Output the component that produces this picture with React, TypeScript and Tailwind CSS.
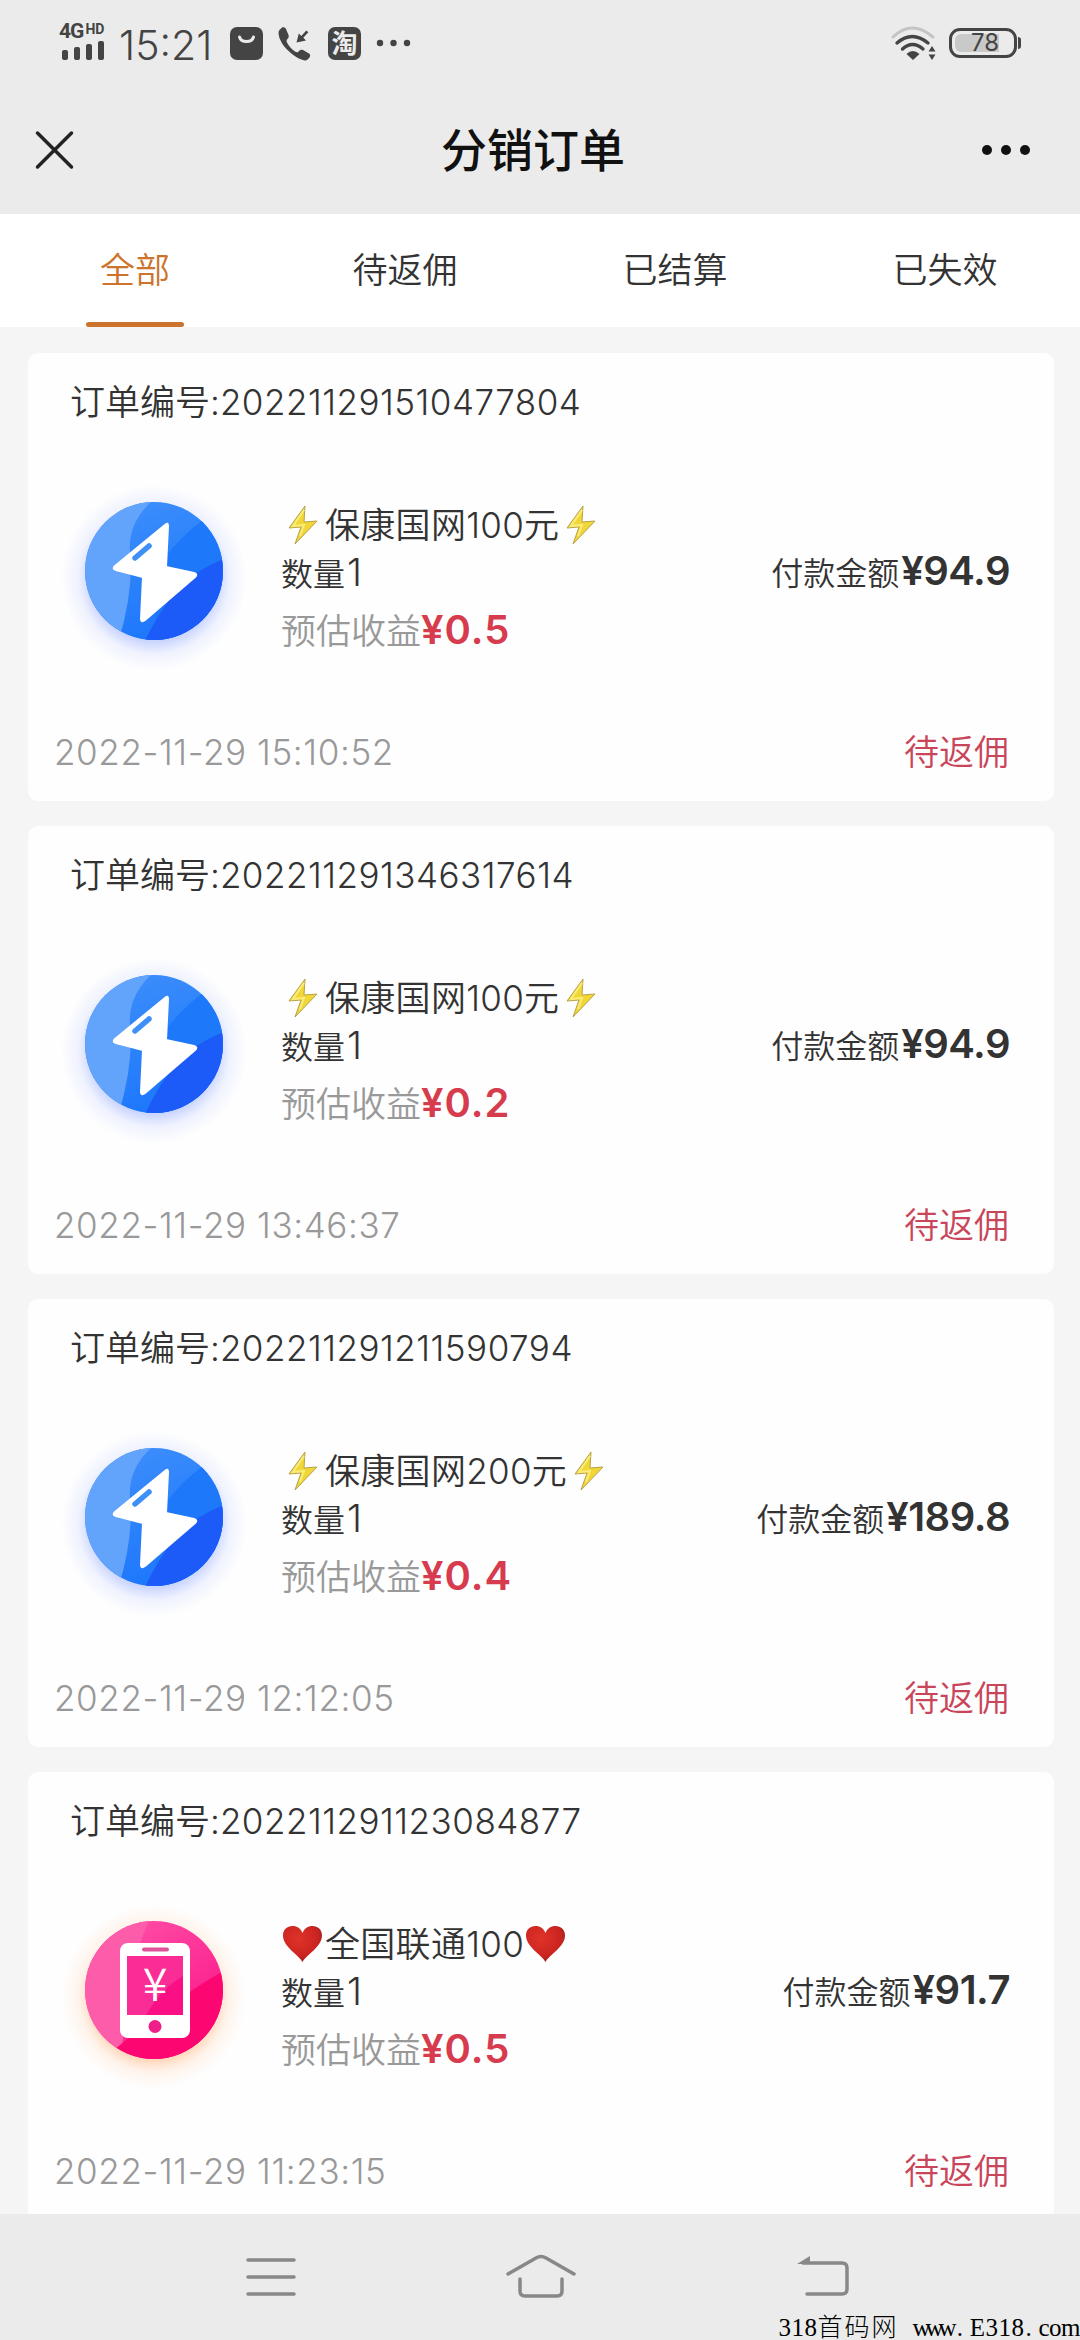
import clsx from 'clsx';

type Order = {
  id: string;
  kind: 'power' | 'phone';
  title: string;
  income: string;
  amount: string;
  time: string;
};

const tabs = ['全部', '待返佣', '已结算', '已失效'];

const orders: Order[] = [
  {
    id: '202211291510477804',
    kind: 'power',
    title: '保康国网100元',
    income: '0.5',
    amount: '94.9',
    time: '2022-11-29 15:10:52',
  },
  {
    id: '202211291346317614',
    kind: 'power',
    title: '保康国网100元',
    income: '0.2',
    amount: '94.9',
    time: '2022-11-29 13:46:37',
  },
  {
    id: '202211291211590794',
    kind: 'power',
    title: '保康国网200元',
    income: '0.4',
    amount: '189.8',
    time: '2022-11-29 12:12:05',
  },
  {
    id: '202211291123084877',
    kind: 'phone',
    title: '全国联通100',
    income: '0.5',
    amount: '91.7',
    time: '2022-11-29 11:23:15',
  },
];

const StatusBar = () => (
  <div className="flex h-[86px] items-center justify-between pl-[59px] pr-[59px] text-[#444]">
    <div className="flex items-center">
      <div className="flex h-[40px] w-[48px] flex-col">
        <div className="flex items-start gap-[2px] font-['Roboto'] font-bold leading-none">
          <span className="text-[21px] leading-[17px] tracking-[-1px]">4G</span>
          <span className="text-[14px] leading-[12px]">HD</span>
        </div>
        <svg width="48" height="21" viewBox="0 0 48 21" fill="currentColor">
          <rect x="3" y="10" width="6" height="10" rx="2" />
          <rect x="15" y="7" width="6" height="13" rx="2" />
          <rect x="27" y="4" width="6" height="16" rx="2" />
          <rect x="39" y="1" width="6" height="19" rx="2" />
        </svg>
      </div>
      <span className="ml-[12px] w-[111px] whitespace-nowrap pt-[3px] text-[41px] font-light leading-[40px]">
        15:21
      </span>
      <svg className="mt-px" width="33" height="33" viewBox="0 0 33 33">
        <rect width="33" height="33" rx="7" fill="#444" />
        <path d="M9.500 10a7.200 6 0 0 0 14 0" fill="none" stroke="#ebebeb" strokeWidth="3" strokeLinecap="round" />
      </svg>
      <svg className="ml-[14px] mt-px" width="34" height="34" viewBox="0 0 34 34" fill="currentColor">
        <path d="M5 .5 2 3.500C.5 7 3 15 9 21.500 15 28 23 33 28 33.500c2 0 4-2 5-4 .5-1.500 0-2.500-1-3l-6-3.500c-1.500-.8-3-.3-4.500 1.500-1 1.200-2 1-3.500 0-3-2-6.500-6-8-9-.7-1.300-.5-2.300.5-3.500 1.300-1.500 1.500-2.500 1-4l-2.500-6C8.300.5 6.500 0 5 .5Z" />
        <path d="m19.500 15.500 2.300-9 2.500 2.500 5-5.500 2 1.800-5 5.500 2.700 2.800Z" />
      </svg>
      <span className="ml-[17px] mt-px flex size-[33px] items-center justify-center rounded-[7px] bg-[#444] text-[26px] font-bold leading-none text-[#ebebeb]">
        淘
      </span>
      <svg className="ml-[15px]" width="36" height="8" viewBox="0 0 36 8" fill="currentColor">
        <circle cx="4" cy="4" r="3.200" />
        <circle cx="17.500" cy="4" r="3.200" />
        <circle cx="31" cy="4" r="3.200" />
      </svg>
    </div>
    <div className="flex items-center">
      <svg width="48" height="36" viewBox="0 0 48 36" fill="none" strokeLinecap="round">
        <path d="M2 12Q21 -6 42 12" stroke="#c4c4c4" strokeWidth="3" />
        <path d="M6 18Q21 5 37 18" stroke="#444" strokeWidth="3.400" />
        <path d="M11.500 24Q21.500 15 32 24" stroke="#444" strokeWidth="3.400" />
        <path d="M15.500 29Q21.500 23 28.500 29L22 35Z" fill="#444" />
        <path d="M41 21l3.500 5.500h-7ZM41 35l3.500-5.500h-7Z" fill="#444" />
      </svg>
      <div className="ml-[10px] flex items-center">
        <div className="flex h-[30px] w-[68px] rounded-[11px] border-[3px] border-[#444] p-[3px]">
          <div className="flex w-[44px] items-center justify-end rounded-l-[6px] bg-[#c9c9c9] text-[24px] leading-none">
            78
          </div>
        </div>
        <div className="ml-px h-[12px] w-[3px] rounded-r-full bg-[#444]" />
      </div>
    </div>
  </div>
);

const TitleBar = () => (
  <div className="flex h-[128px] items-center justify-between pb-px pl-[35px] pr-[48px]">
    <svg width="40" height="40" viewBox="0 0 40 40" stroke="#222" strokeWidth="3.500" strokeLinecap="round">
      <path d="m2.500 3 34 34M36.500 3l-34 34" />
    </svg>
    <h1 className="pl-[11px] text-[46px] font-medium leading-none text-[#111]">分销订单</h1>
    <svg width="52" height="12" viewBox="0 0 52 12" fill="#111">
      <circle cx="7" cy="6" r="5" />
      <circle cx="26" cy="6" r="5" />
      <circle cx="45" cy="6" r="5" />
    </svg>
  </div>
);

const Bolt = () => (
  <svg className="w-[44px] shrink-0" height="42" viewBox="0 0 44 42">
    <path d="M24 2 8 24l12-1-6 17 22-23-13 1Z" fill="#f0d637" stroke="#b8a24a" strokeWidth="1" strokeLinejoin="round" />
    <path d="M23 6 12 22l11-1-4 11" fill="none" stroke="#fbec7a" strokeWidth="2" />
  </svg>
);

const Heart = () => (
  <svg className="w-[44px] shrink-0" height="42" viewBox="0 0 44 42">
    <defs>
      <radialGradient id="heart" cx="40%" cy="35%" r="70%">
        <stop offset="0" stopColor="#df3329" />
        <stop offset="0.700" stopColor="#cb2420" />
        <stop offset="1" stopColor="#8f2420" />
      </radialGradient>
    </defs>
    <path
      d="M21.500 39C18 32 2 24 2 12.500 2 6.500 6.300 3 11.500 3c4.500 0 8.300 2.600 10 7 1.700-4.400 5.500-7 10-7C36.700 3 41 6.500 41 12.500 41 24 25 32 21.500 39Z"
      fill="url(#heart)"
    />
  </svg>
);

const PowerIcon = () => (
  <svg width="200" height="200" viewBox="0 0 200 200">
    <defs>
      <radialGradient id="blueGlow">
        <stop offset="0.680" stopColor="#6f8dff" stopOpacity="0.360" />
        <stop offset="0.820" stopColor="#6f8dff" stopOpacity="0.100" />
        <stop offset="1" stopColor="#6f8dff" stopOpacity="0" />
      </radialGradient>
      <linearGradient id="blue" x1="0.300" y1="0" x2="0.700" y2="1">
        <stop offset="0" stopColor="#4593fb" />
        <stop offset="1" stopColor="#1270fb" />
      </linearGradient>
      <clipPath id="disc">
        <circle cx="100" cy="100" r="69" />
      </clipPath>
    </defs>
    <circle cx="100" cy="107" r="93" fill="url(#blueGlow)" />
    <g clipPath="url(#disc)">
      <rect width="200" height="200" fill="url(#blue)" />
      <path d="M98 30Q74 52 76 80 80 120 64 172H20V30Z" fill="#62a3fb" />
      <path d="M150 48Q126 66 110 88L98 172h80V48Z" fill="#1d78fa" />
      <path d="M172 87Q130 104 116 128 102 146 90 172h90Z" fill="#1d5bf8" />
    </g>
    <path
      d="M111 54 61 95q-3 3 1 4l27 7-2 42q0 4 4 1l50-43q3-3-1-4l-28-6 2-41q0-4-3-1Z"
      fill="#fff"
      stroke="#fff"
      strokeWidth="2"
      strokeLinejoin="round"
    />
    <path d="m81 87 14-12" stroke="#3f8ff8" strokeWidth="5.500" strokeLinecap="round" />
  </svg>
);

const PhoneIcon = () => (
  <svg width="200" height="200" viewBox="0 0 200 200">
    <defs>
      <radialGradient id="warmGlow">
        <stop offset="0.680" stopColor="#ffa05b" stopOpacity="0.420" />
        <stop offset="0.820" stopColor="#ffb27a" stopOpacity="0.140" />
        <stop offset="1" stopColor="#ffb27a" stopOpacity="0" />
      </radialGradient>
      <linearGradient id="pink" x1="0.200" y1="0.100" x2="0.800" y2="0.900">
        <stop offset="0" stopColor="#ff58ab" />
        <stop offset="1" stopColor="#fb0b83" />
      </linearGradient>
      <clipPath id="pinkDisc">
        <circle cx="100" cy="100" r="69" />
      </clipPath>
    </defs>
    <circle cx="100" cy="107" r="92" fill="url(#warmGlow)" />
    <g clipPath="url(#pinkDisc)">
      <rect width="200" height="200" fill="url(#pink)" />
      <path d="M98 25Q70 80 68 170H20V25Z" fill="#fd5cab" />
      <path d="M175 78Q125 105 60 160l20 20h100Z" fill="#fc0672" />
    </g>
    <rect x="66" y="53" width="70" height="95" rx="8" fill="#fff" />
    <rect x="73" y="66" width="56" height="59" fill="#fa2c95" />
    <path d="M129 86Q108 98 92 125h37Z" fill="#fa0f84" />
    <rect x="88" y="57.500" width="27" height="4" rx="2" fill="#e0529a" />
    <circle cx="101" cy="136.500" r="6.500" fill="#ee1f88" />
    <text x="101" y="111" textAnchor="middle" fontSize="45" fill="#fff" className="font-['Noto_Sans_CJK_SC']">
      ¥
    </text>
  </svg>
);

const OrderCard = ({ order }: { order: Order }) => {
  const Emoji = order.kind === 'power' ? Bolt : Heart;
  return (
    <div className="flex h-[448px] shrink-0 flex-col rounded-[10px] bg-[#fefefe] font-[350] text-[#333]">
      <div className="flex h-[98px] items-center whitespace-nowrap pl-[42px] text-[35px]">
        订单编号:<span className="tracking-[0.500px]">{order.id}</span>
      </div>
      <div className="flex h-[240px] items-center pl-[26px] pr-[44px]">
        {order.kind === 'power' ? <PowerIcon /> : <PhoneIcon />}
        <div className="ml-[27px] flex h-full flex-col pt-[50px]">
          <div className="flex h-[48px] items-center whitespace-nowrap text-[35px] leading-[48px] tracking-[0.300px]">
            <Emoji />
            {order.title}
            <Emoji />
          </div>
          <div className="h-[48px] text-[32px] leading-[46px]">
            数量<span className="ml-[2px] text-[38px] font-light">1</span>
          </div>
          <div className="h-[66px] whitespace-nowrap text-[35px] leading-[66px] text-[#999]">
            预估收益
            <span className="text-[40px] font-[580] tracking-[1px] text-[#d63c4d]">¥{order.income}</span>
          </div>
        </div>
        <div className="ml-auto whitespace-nowrap pt-[3px] text-[32px] leading-[48px]">
          付款金额<span className="ml-[2px] text-[40px] font-[560] tracking-[-0.500px]">¥{order.amount}</span>
        </div>
      </div>
      <div className="flex h-[110px] items-center justify-between pl-[26px] pr-[45px] pt-3 text-[35px]">
        <span className="tracking-[0.600px] text-[#999]">{order.time}</span>
        <span className="text-[#c9455a]">待返佣</span>
      </div>
    </div>
  );
};

const NavBar = () => (
  <div className="flex h-[126px] shrink-0 flex-col bg-[#ebebeb]">
    <div className="grid h-[102px] grid-cols-[1fr_178px_1fr] pt-[40px]">
      <svg className="ml-[244px]" width="54" height="46" viewBox="0 0 54 46" stroke="#888" strokeWidth="3.500" strokeLinecap="round">
        <path d="M4 6h46M4 23h46M4 40h46" />
      </svg>
      <svg className="ml-[54px]" width="72" height="46" viewBox="0 0 72 46" fill="none" stroke="#888" strokeWidth="3.500" strokeLinecap="round">
        <path d="M3 20 31 4q5-3 10 0l28 16" />
        <path d="M15 25v12q0 5 5 5h32q5 0 5-5V25" />
      </svg>
      <svg className="ml-[166px]" width="56" height="46" viewBox="0 0 56 46" fill="none" stroke="#888" strokeWidth="3.500" strokeLinecap="round">
        <path d="M8 9h39q5 0 5 5v21q0 5-5 5H12" />
        <path d="M2 10 15 2v8Z" fill="#888" stroke="none" />
      </svg>
    </div>
    <div className="flex h-[24px] items-center justify-end whitespace-nowrap font-['Liberation_Serif','Noto_Sans_CJK_SC',serif] text-[25px] leading-[24px] text-black">
      <span className="tracking-[0.500px]">318</span>
      <span className="mr-[14px] font-light tracking-[2px]">首码网</span>
      <span className="tracking-[-5px]">www</span>
      <span className="ml-[5px] w-[13px]">.</span>
      <span className="tracking-[0.500px]">E318</span>
      <span className="ml-px w-[13px]">.</span>
      <span className="tracking-[-0.500px]">com</span>
    </div>
  </div>
);

const App = () => {
  return (
    <div className="flex h-[2340px] w-[1080px] flex-col overflow-hidden bg-[#f5f5f5] font-['Inter','Noto_Sans_CJK_SC',sans-serif]">
      <header className="h-[214px] shrink-0 bg-[#ebebeb]">
        <StatusBar />
        <TitleBar />
      </header>
      <nav className="grid h-[113px] shrink-0 grid-cols-4 bg-white">
        {tabs.map((tab, i) => (
          <div
            key={tab}
            className={clsx(
              'flex flex-col items-center justify-between text-[35px] font-[350]',
              i === 0 ? 'text-[#cc742d]' : 'text-[#333]'
            )}
          >
            <span className="pt-[29px] leading-[54px]">{tab}</span>
            {i === 0 && <span className="h-[5px] w-[98px] rounded-full bg-[#cc742d]" />}
          </div>
        ))}
      </nav>
      <main className="flex min-h-0 flex-1 flex-col gap-[25px] overflow-hidden pl-[28px] pr-[26px] pt-[26px]">
        {orders.map((order) => (
          <OrderCard key={order.id} order={order} />
        ))}
      </main>
      <NavBar />
    </div>
  );
};

export default App;
